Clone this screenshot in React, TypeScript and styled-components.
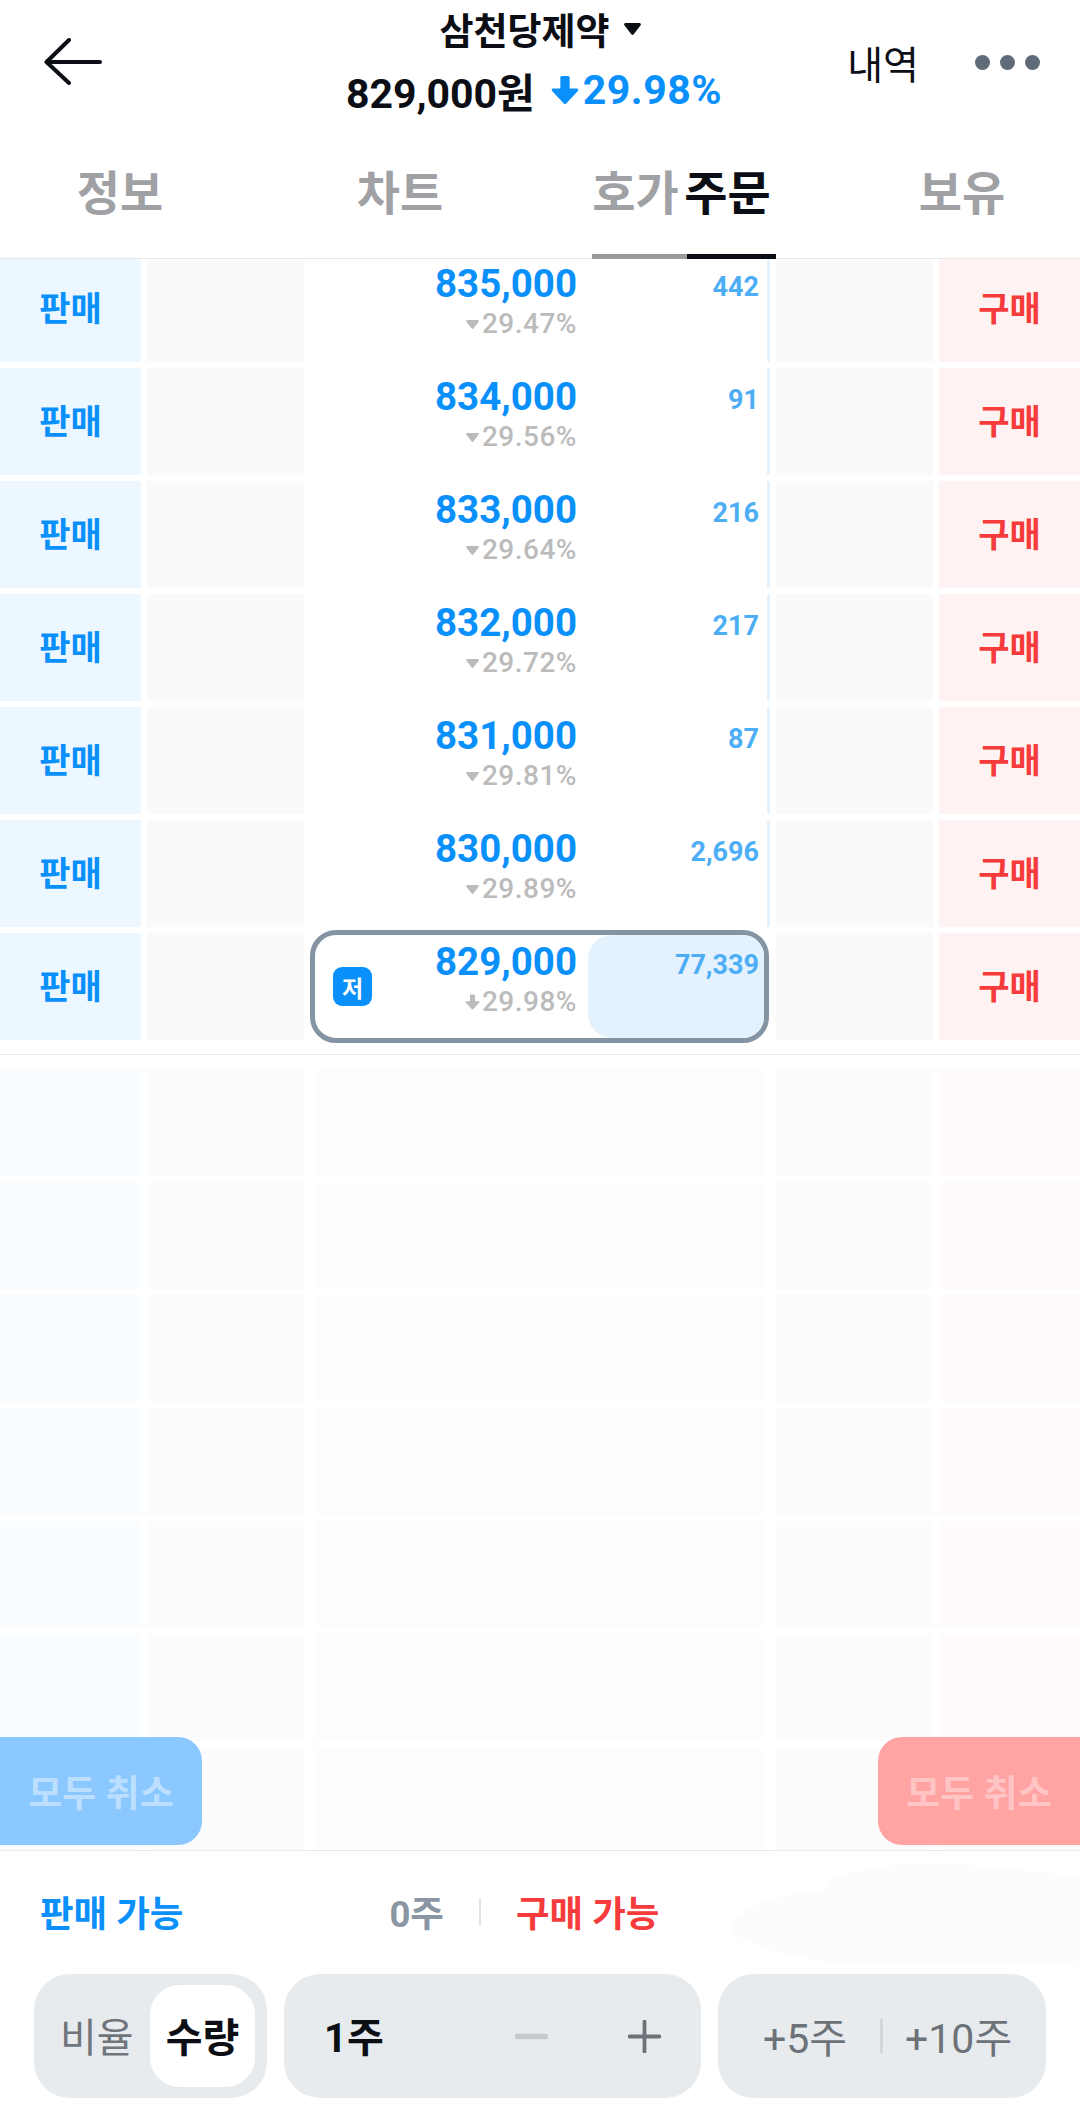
import React from 'react';
import styled, { createGlobalStyle } from 'styled-components';

const Global = createGlobalStyle`
  html, body { margin: 0; padding: 0; background: #fff; }
  * { box-sizing: border-box; }
  body { font-family: Roboto, "Noto Sans CJK KR", sans-serif; }
`;

const BLUE = '#0a90fb';
const RED = '#f53b3b';
const INK = '#0b0e14';
const COLUMNS = '141px 163px 472px 163px 141px';

const Page = styled.div`
  position: relative;
  width: 1080px;
  height: 2120px;
  overflow: hidden;
  background: #fff;
  display: flex;
  flex-direction: column;
`;

const TopBar = styled.header`
  height: 124px;
  display: grid;
  grid-template-columns: 1fr auto 1fr;
  align-items: center;
`;
const BackButton = styled.div`
  padding-left: 44px;
  display: flex;
  svg { display: block; }
`;
const TitleBlock = styled.div`
  align-self: start;
  padding-top: 4px;
  margin-left: -12px;
  display: flex;
  flex-direction: column;
  align-items: center;
`;
const TitleRow = styled.div`
  display: flex;
  align-items: center;
  gap: 14px;
  height: 50px;
  margin-left: 12px;
  font-size: 37px;
  font-weight: 700;
  color: ${INK};
`;
const PriceRow = styled.div`
  display: flex;
  align-items: center;
  height: 52px;
  margin-top: 10px;
  font-size: 41px;
  font-weight: 700;
  color: ${INK};
`;
const Change = styled.span`
  display: flex;
  align-items: center;
  margin-left: 16px;
  gap: 4px;
  color: ${BLUE};
  letter-spacing: 0.5px;
`;
const Actions = styled.div`
  display: flex;
  justify-content: flex-end;
  align-items: center;
  padding-right: 40px;
  gap: 56px;
`;
const History = styled.span`
  font-size: 39px;
  font-weight: 400;
  color: ${INK};
`;
const Dots = styled.div`
  display: flex;
  gap: 10px;
`;
const Dot = styled.i`
  display: block;
  width: 15px;
  height: 15px;
  border-radius: 50%;
  background: #5f6b78;
`;

const Tabs = styled.nav`
  height: 135px;
  display: flex;
  border-bottom: 1px solid #e6e8ea;
`;
const Tab = styled.div<{ $w: number; $ml?: number; $active?: boolean; $under?: string; $pr?: number }>`
  width: ${p => p.$w}px;
  margin-left: ${p => p.$ml ?? 0}px;
  padding-right: ${p => p.$pr ?? 0}px;
  display: flex;
  align-items: center;
  justify-content: center;
  white-space: nowrap;
  font-size: 47px;
  font-weight: 700;
  color: ${p => (p.$active ? INK : '#a0a1a4')};
  border-bottom: 5px solid ${p => p.$under ?? 'transparent'};
  margin-bottom: -1px;
`;

const ListClip = styled.section`
  height: 795px;
  overflow: hidden;
  flex: none;
`;
const List = styled.div`
  margin-top: -4px;
  display: flex;
  flex-direction: column;
  gap: 6px;
`;
const Row = styled.div`
  height: 107px;
  display: grid;
  grid-template-columns: ${COLUMNS};
`;
const Side = styled.div<{ $kind: 'sell' | 'buy' }>`
  display: flex;
  align-items: center;
  justify-content: center;
  padding-bottom: 5px;
  font-size: 34px;
  font-weight: 700;
  background: ${p => (p.$kind === 'sell' ? '#edf7ff' : '#fff2f2')};
  color: ${p => (p.$kind === 'sell' ? BLUE : RED)};
`;
const Mid = styled.div<{ $side: 'l' | 'r' }>`
  background: #fafafa;
  ${p => (p.$side === 'l' ? 'margin-left: 6px;' : 'margin-right: 6px;')}
`;
const Center = styled.div`
  position: relative;
  background: #fff;
  display: grid;
  grid-template-columns: 273px 182px;
  padding-top: 13px;
`;
const VolumeBar = styled.div`
  position: absolute;
  top: 0;
  bottom: 0;
  right: 6px;
  background: #e3f2fd;
  border-radius: 2px;
`;
const PriceCol = styled.div`
  position: relative;
  z-index: 2;
  display: flex;
  flex-direction: column;
  align-items: flex-end;
`;
const Price = styled.div`
  font-size: 38.5px;
  line-height: 32px;
  font-weight: 700;
  color: ${BLUE};
`;
const Rate = styled.div`
  display: flex;
  align-items: center;
  gap: 2px;
  margin-top: 10px;
  font-size: 28px;
  line-height: 28px;
  font-weight: 500;
  letter-spacing: 0.5px;
  color: #bbbbbb;
`;
const Qty = styled.div`
  position: relative;
  z-index: 2;
  padding-top: 3px;
  text-align: right;
  font-size: 27px;
  line-height: 32px;
  font-weight: 700;
  color: #4eaef5;
`;
const Current = styled.div`
  position: absolute;
  z-index: 1;
  left: 6px;
  right: 7px;
  top: -3px;
  bottom: -3px;
  border: 5px solid #8494a3;
  border-radius: 26px;
  overflow: hidden;
`;
const CurrentFill = styled.div`
  position: absolute;
  top: 0;
  bottom: 0;
  right: 0;
  width: 176px;
  background: #e3f2fd;
  border-radius: 24px 0 0 24px;
`;
const Badge = styled.div`
  position: absolute;
  z-index: 2;
  left: 29px;
  top: 34px;
  width: 39px;
  height: 39px;
  border-radius: 9px;
  background: ${BLUE};
  color: #fff;
  font-size: 23px;
  font-weight: 700;
  display: flex;
  align-items: center;
  justify-content: center;
`;

const EmptyArea = styled.section`
  position: relative;
  height: 796px;
  flex: none;
  overflow: hidden;
  border-top: 1px solid #e8eaec;
  padding-top: 14px;
  display: flex;
  flex-direction: column;
  gap: 6px;
`;
const EmptyRow = styled.div`
  height: 107px;
  flex: none;
  display: grid;
  grid-template-columns: ${COLUMNS};
`;
const EmptyCell = styled.div<{ $c: string; $m?: string }>`
  background: ${p => p.$c};
  margin: ${p => p.$m ?? '0'};
`;
const CancelButton = styled.div<{ $kind: 'sell' | 'buy' }>`
  position: absolute;
  bottom: 5px;
  ${p => (p.$kind === 'sell' ? 'left: 0;' : 'right: 0;')}
  width: 202px;
  height: 108px;
  border-radius: ${p => (p.$kind === 'sell' ? '0 24px 24px 0' : '24px 0 0 24px')};
  background: ${p => (p.$kind === 'sell' ? '#8ac8ff' : '#ffa3a3')};
  color: ${p => (p.$kind === 'sell' ? '#bcdfff' : '#ffc5c5')};
  font-size: 37px;
  font-weight: 700;
  white-space: nowrap;
  display: flex;
  align-items: center;
  justify-content: center;
`;

const Bottom = styled.footer`
  position: relative;
  flex: 1;
  border-top: 1px solid #e8eaec;
  display: flex;
  flex-direction: column;
`;
const Smudge = styled.svg`
  position: absolute;
  left: 730px;
  top: 6px;
`;
const Available = styled.div`
  position: relative;
  height: 123px;
  padding-left: 40px;
  padding-bottom: 2px;
  display: flex;
  align-items: center;
  font-size: 36.5px;
  font-weight: 700;
`;
const AvailLabel = styled.span<{ $kind: 'sell' | 'buy' }>`
  color: ${p => (p.$kind === 'sell' ? BLUE : RED)};
  white-space: nowrap;
`;
const AvailQty = styled.span`
  margin-left: 206px;
  color: #8a96a3;
`;
const AvailRule = styled.i`
  display: block;
  width: 2px;
  height: 28px;
  margin: 0 35px;
  background: #e2e4e6;
`;
const Controls = styled.div`
  display: flex;
  padding-left: 34px;
  gap: 17px;
`;
const Pill = styled.div<{ $w: number }>`
  width: ${p => p.$w}px;
  height: 124px;
  border-radius: 36px;
  background: #e8ebee;
  display: flex;
  align-items: center;
  font-size: 40px;
`;
const ModeOff = styled.span`
  margin-left: 26px;
  width: 90px;
  padding-bottom: 3px;
  color: #6f757b;
  font-weight: 400;
  white-space: nowrap;
`;
const ModeOn = styled.span`
  width: 105px;
  height: 102px;
  padding-bottom: 3px;
  border-radius: 30px;
  background: #fff;
  color: ${INK};
  font-weight: 700;
  white-space: nowrap;
  display: flex;
  align-items: center;
  justify-content: center;
`;
const StepValue = styled.span`
  margin-left: 40px;
  padding-bottom: 3px;
  font-weight: 700;
  color: ${INK};
  width: 191px;
`;
const StepIcon = styled.svg<{ $ml: number }>`
  margin-left: ${p => p.$ml}px;
  flex: none;
`;
const Quick = styled.span<{ $ml: number }>`
  margin-left: ${p => p.$ml}px;
  padding-bottom: 3px;
  font-size: 41px;
  color: #6c7278;
  font-weight: 400;
  white-space: nowrap;
`;
const QuickRule = styled.i`
  display: block;
  width: 3px;
  height: 34px;
  margin-left: 33px;
  background: #d3d6d9;
`;

const rows = [
  { price: '835,000', rate: '29.47%', qty: '442' },
  { price: '834,000', rate: '29.56%', qty: '91' },
  { price: '833,000', rate: '29.64%', qty: '216' },
  { price: '832,000', rate: '29.72%', qty: '217' },
  { price: '831,000', rate: '29.81%', qty: '87' },
  { price: '830,000', rate: '29.89%', qty: '2,696' },
  { price: '829,000', rate: '29.98%', qty: '77,339', current: true },
];

const DownArrow = ({ w, h, c }: { w: number; h: number; c: string }) => (
  <svg width={w} height={h} viewBox="0 0 27 29" aria-hidden="true">
    <path d="M9 2.5a1.5 1.5 0 0 1 1.5-1.5h6A1.5 1.5 0 0 1 18 2.5V13h7a1.4 1.4 0 0 1 1 2.4L14.6 27.6a1.6 1.6 0 0 1-2.2 0L1 15.4A1.4 1.4 0 0 1 2 13h7z" fill={c} />
  </svg>
);

const Caret = ({ w, h, c }: { w: number; h: number; c: string }) => (
  <svg width={w} height={h} viewBox="0 0 17 12" aria-hidden="true">
    <path d="M1.6 0h13.8c1.2 0 1.9 1.3 1.2 2.3L9.7 11.3c-.6.8-1.8.8-2.4 0L.4 2.3C-.3 1.3.4 0 1.6 0z" fill={c} />
  </svg>
);

export default function App() {
  return (
    <Page>
      <Global />
      <TopBar>
        <BackButton>
          <svg width="60" height="48" viewBox="0 0 60 48" fill="none" aria-hidden="true">
            <path d="M2.5 24H56M25 2L2.5 24L25 45" stroke={INK} strokeWidth="4" strokeLinecap="round" strokeLinejoin="round" />
          </svg>
        </BackButton>
        <TitleBlock>
          <TitleRow>
            삼천당제약
            <Caret w={17} h={12} c={INK} />
          </TitleRow>
          <PriceRow>
            829,000원
            <Change>
              <DownArrow w={28} h={30} c={BLUE} />
              29.98%
            </Change>
          </PriceRow>
        </TitleBlock>
        <Actions>
          <History>내역</History>
          <Dots>
            <Dot />
            <Dot />
            <Dot />
          </Dots>
        </Actions>
      </TopBar>

      <Tabs>
        <Tab $w={240}>정보</Tab>
        <Tab $w={320}>차트</Tab>
        <Tab $w={95} $ml={32} $pr={8} $under="#999999">호가</Tab>
        <Tab $w={89} $pr={8} $active $under={INK}>주문</Tab>
        <Tab $w={236} $ml={68}>보유</Tab>
      </Tabs>

      <ListClip>
        <List>
          {rows.map(r => (
            <Row key={r.price}>
              <Side $kind="sell">판매</Side>
              <Mid $side="l" />
              <Center>
                {!r.current && <VolumeBar style={{ width: 3 }} />}
                {r.current && (
                  <>
                    <Current>
                      <CurrentFill />
                    </Current>
                    <Badge>저</Badge>
                  </>
                )}
                <PriceCol>
                  <Price>{r.price}</Price>
                  <Rate>
                    {r.current ? <DownArrow w={15} h={18} c="#bbbbbb" /> : <Caret w={15} h={9} c="#bbbbbb" />}
                    {r.rate}
                  </Rate>
                </PriceCol>
                <Qty>{r.qty}</Qty>
              </Center>
              <Mid $side="r" />
              <Side $kind="buy">구매</Side>
            </Row>
          ))}
        </List>
      </ListClip>

      <EmptyArea>
        {[0, 1, 2, 3, 4, 5, 6].map(i => (
          <EmptyRow key={i}>
            <EmptyCell $c="#f9fdff" />
            <EmptyCell $c="#fcfcfc" $m="0 0 0 6px" />
            <EmptyCell $c="#fdfdfd" $m="0 13px 0 12px" />
            <EmptyCell $c="#fcfcfc" $m="0 6px 0 0" />
            <EmptyCell $c="#fffbfb" />
          </EmptyRow>
        ))}
        <CancelButton $kind="sell">모두 취소</CancelButton>
        <CancelButton $kind="buy">모두 취소</CancelButton>
      </EmptyArea>

      <Bottom>
        <Smudge width="350" height="112" viewBox="0 0 350 112" aria-hidden="true">
          <path d="M0 70C10 45 60 36 95 34C100 20 110 14 150 12C170 2 230 4 350 20V110C280 106 200 104 120 108C60 100 10 90 0 70z" fill="#fcfcfc" />
        </Smudge>
        <Available>
          <AvailLabel $kind="sell">판매 가능</AvailLabel>
          <AvailQty>0주</AvailQty>
          <AvailRule />
          <AvailLabel $kind="buy">구매 가능</AvailLabel>
        </Available>
        <Controls>
          <Pill $w={233}>
            <ModeOff>비율</ModeOff>
            <ModeOn>수량</ModeOn>
          </Pill>
          <Pill $w={417}>
            <StepValue>1주</StepValue>
            <StepIcon $ml={0} width="33" height="33" viewBox="0 0 33 33" aria-hidden="true">
              <path d="M2.5 16.5H30.5" stroke="#c5c8cc" strokeWidth="5.5" strokeLinecap="round" />
            </StepIcon>
            <StepIcon $ml={80} width="33" height="33" viewBox="0 0 33 33" aria-hidden="true">
              <path d="M1.5 16.5H31.5M16.5 1.5V31.5" stroke="#6c7278" strokeWidth="3.8" strokeLinecap="round" />
            </StepIcon>
          </Pill>
          <Pill $w={328}>
            <Quick $ml={45}>+5주</Quick>
            <QuickRule />
            <Quick $ml={22}>+10주</Quick>
          </Pill>
        </Controls>
      </Bottom>
    </Page>
  );
}
